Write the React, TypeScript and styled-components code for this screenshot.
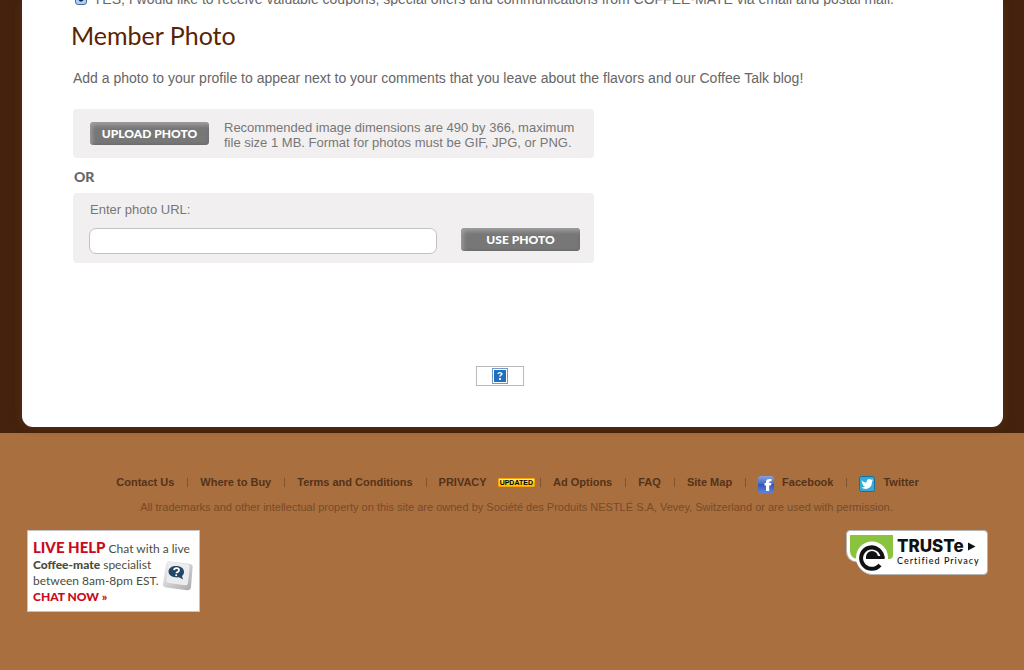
import React from "react";
import styled, { createGlobalStyle } from "styled-components";

const GlobalStyle = createGlobalStyle`
  *, *::before, *::after { box-sizing: border-box; }
  body {
    margin: 0;
    background: #a96f3f;
    font-family: "Liberation Sans", Arial, sans-serif;
  }
`;

const Surround = styled.div`
  padding: 0 21px 6px 22px;
  background: #44220d;
`;

const Card = styled.main`
  display: flex;
  flex-direction: column;
  align-items: flex-start;
  padding: 0 50px 41px;
  background: #fff;
  border-radius: 0 0 11px 11px;
  box-shadow: 0 0 9px #5c3014;
  color: #666;
`;

const OptIn = styled.label`
  display: flex;
  align-items: flex-end;
  gap: 6px;
  height: 6px;
  margin-left: 3px;
  overflow: hidden;
  font-size: 14px;
  line-height: 14px;
  white-space: nowrap;
`;

const Tick = styled.input`
  appearance: none;
  flex: none;
  width: 12px;
  height: 12px;
  margin: 0 0 1px;
  border: 1px solid #4a6a9c;
  border-radius: 3px;
  background: radial-gradient(circle at 5px 5px, #10243f 2px, #a9d0f5 3px);
`;

const Title = styled.h1`
  margin: 13px 0 0 -1px;
  color: #5a2403;
  font: 400 25px/32px Lato, sans-serif;
`;

const Intro = styled.p`
  margin: 19px 0 0 1px;
  font-size: 14px;
  line-height: 16px;
`;

const Panel = styled.section`
  width: 521px;
  max-width: 100%;
  margin-left: 1px;
  border-radius: 4px;
  background: #f1eff0;
  color: #777;
  font-size: 13px;
  line-height: 15px;
`;

const UploadPanel = styled(Panel)`
  display: flex;
  align-items: center;
  gap: 15px;
  margin-top: 23px;
  padding: 8px 0 8px 17px;
`;

const UrlPanel = styled(Panel)`
  display: flex;
  flex-direction: column;
  padding: 9px 14px 9px 16px;
`;

const UrlRow = styled.div`
  display: flex;
  align-items: flex-start;
  gap: 24px;
  margin-top: 11px;
`;

const UrlLabel = styled.label`
  padding-left: 1px;
`;

const UrlInput = styled.input`
  flex: 1;
  min-width: 0;
  height: 26px;
  padding: 0 8px;
  border: 1px solid #c2c2c2;
  border-radius: 7px;
  background: #fff;
  font: 13px "Liberation Sans", Arial, sans-serif;
`;

const Hint = styled.p`
  margin: 0;
  padding-top: 3px;
`;

const GreyButton = styled.button`
  flex: none;
  width: 119px;
  height: 23px;
  padding: 0;
  border: 0;
  border-radius: 4px;
  background: #777;
  box-shadow: inset 2px 3px 4px #a0a0a0, inset -1px -1px 2px #686868;
  color: #fff;
  font: 900 12px/23px Lato, sans-serif;
`;

const Or = styled.p`
  margin: 10px 0 7px 2px;
  font: 900 14px/18px Lato, sans-serif;
`;

const MissingImage = styled.button`
  display: flex;
  align-items: center;
  justify-content: center;
  align-self: center;
  width: 48px;
  height: 20px;
  margin: 103px 25px 0 0;
  padding: 0;
  border: 1px solid #bbb;
  background: #fff;
`;

const Footer = styled.footer`
  display: flex;
  flex-direction: column;
  align-items: center;
  padding: 40px 36px 58px 27px;
  color: #774b28;
  font-size: 11px;
`;

const FooterNav = styled.nav`
  display: flex;
  align-items: center;
  height: 18px;
  margin-left: 20px;
  font-weight: 700;
  white-space: nowrap;
`;

const FooterLink = styled.a`
  display: flex;
  align-items: center;
  gap: 8px;
  color: #54331a;
  text-decoration: none;

  svg {
    margin: 2px 0 -2px;
  }
`;

const Divider = styled.span<{ $tight?: boolean }>`
  width: 1px;
  height: 9px;
  margin: 0 12px 0 ${(p) => (p.$tight ? 5 : 13)}px;
  background: #80532f;
`;

const Updated = styled.span`
  margin-left: 3px;
  padding: 0 1px;
  border: 1px solid #f9a600;
  border-radius: 1px;
  background: linear-gradient(#fff6b0, #ffc400 70%);
  color: #000;
  font: 700 7px/7px "Liberation Sans", sans-serif;
`;

const Legal = styled.p`
  margin: 10px 0 0 18px;
  line-height: 13px;
`;

const Badges = styled.div`
  display: flex;
  align-items: flex-start;
  justify-content: space-between;
  align-self: stretch;
  margin-top: 16px;
`;

const Chat = styled.a`
  display: flex;
  width: 173px;
  height: 82px;
  padding: 8px 5px;
  border: 1px solid #c8c2c4;
  background: #fff;
  color: #4b4d3c;
  font: 12px/16px Lato, sans-serif;
  text-decoration: none;
  white-space: nowrap;
`;

const ChatText = styled.span`
  width: 129px;

  b {
    font-weight: 900;
  }
`;

const Red = styled.b<{ $large?: boolean }>`
  color: #cb0920;
  font-size: ${(p) => (p.$large ? 15 : 12)}px;
`;

const ChatKey = styled.svg`
  flex: none;
  margin-top: 20px;
`;

const Truste = styled.a`
  display: flex;
`;

const facebook = (
  <svg width="16" height="17" viewBox="0 0 16 17" aria-hidden="true">
    <defs>
      <linearGradient id="fb" x2="0" y2="1">
        <stop offset="0" stopColor="#86a0e0" />
        <stop offset=".45" stopColor="#4a6cc0" />
        <stop offset=".5" stopColor="#3158b4" />
        <stop offset="1" stopColor="#5d83e0" />
      </linearGradient>
    </defs>
    <rect width="16" height="17" rx="3" fill="url(#fb)" />
    <path d="M8 15V9.500H6.500V7H8V6c0-2.500 1.500-3.500 5.500-3v2.300c-1.800-.2-2.300.1-2.300 1.700h2.200l-.4 2.500h-1.800V15z" fill="#fff" />
  </svg>
);

const twitter = (
  <svg width="16" height="16" viewBox="0 0 16 16" aria-hidden="true">
    <rect x=".5" y=".5" width="15" height="15" rx="2" fill="#36abd8" stroke="#176f9b" />
    <path d="M2.500 4.200C4 5.700 5.600 6.500 7.700 6.500 7.300 4.400 8.600 3 10.200 3c.8 0 1.400.3 1.900.8.700-.1 1.200-.4 1.700-.7-.2.600-.5 1-.9 1.400l1.400-.3-1.300 1.400C13.200 10 10.500 13 6.800 13c-1.700 0-3.200-.5-4.400-1.400 1.500.1 2.700-.3 3.700-1.100-1.200-.1-2-.8-2.300-1.700h1C3.500 8.300 2.900 7.400 2.900 6.200l1 .3C2.800 5.700 2.400 4.900 2.500 4.200z" fill="#fff" />
  </svg>
);

const items: { label: string; icon?: React.ReactNode; updated?: boolean }[] = [
  { label: "Contact Us" },
  { label: "Where to Buy" },
  { label: "Terms and Conditions" },
  { label: "PRIVACY", updated: true },
  { label: "Ad Options" },
  { label: "FAQ" },
  { label: "Site Map" },
  { label: "Facebook", icon: facebook },
  { label: "Twitter", icon: twitter },
];

export default function App() {
  return (
    <>
      <GlobalStyle />
      <Surround>
        <Card>
          <OptIn>
            <Tick type="checkbox" defaultChecked />
            YES, I would like to receive valuable coupons, special offers and communications from COFFEE-MATE via email and postal mail.
          </OptIn>
          <Title>Member Photo</Title>
          <Intro>
            Add a photo to your profile to appear next to your comments that you leave about the flavors and our Coffee Talk blog!
          </Intro>
          <UploadPanel>
            <GreyButton type="button">UPLOAD PHOTO</GreyButton>
            <Hint>
              Recommended image dimensions are 490 by 366, maximum
              <br />
              file size 1 MB. Format for photos must be GIF, JPG, or PNG.
            </Hint>
          </UploadPanel>
          <Or>OR</Or>
          <UrlPanel>
            <UrlLabel htmlFor="photo-url">Enter photo URL:</UrlLabel>
            <UrlRow>
              <UrlInput id="photo-url" type="text" />
              <GreyButton type="button">USE PHOTO</GreyButton>
            </UrlRow>
          </UrlPanel>
          <MissingImage type="submit" aria-label="Submit">
            <svg width="16" height="16" viewBox="0 0 16 16" aria-hidden="true">
              <rect x=".5" y=".5" width="15" height="15" fill="#fff" stroke="#6f9bd0" />
              <rect x="2" y="2" width="12" height="12" fill="#2270b8" />
              <path d="M5.500 6V5h1V4h3v1h1v2h-1v1h-1v1h-1V7h1V5h-1v1zM7 10h2v2H7z" fill="#e8f2fb" />
            </svg>
          </MissingImage>
        </Card>
      </Surround>
      <Footer>
        <FooterNav>
          {items.map((item, i) => (
            <React.Fragment key={item.label}>
              {i > 0 && <Divider $tight={items[i - 1].updated} />}
              <FooterLink href="#">
                {item.icon}
                {item.label}
                {item.updated && <Updated>UPDATED</Updated>}
              </FooterLink>
            </React.Fragment>
          ))}
        </FooterNav>
        <Legal>
          All trademarks and other intellectual property on this site are owned by Société des Produits NESTLÉ S.A, Vevey, Switzerland or are used with permission.
        </Legal>
        <Badges>
          <Chat href="#">
            <ChatText>
              <Red $large>LIVE HELP</Red> Chat with a live
              <br />
              <b>Coffee-mate</b> specialist
              <br />
              between 8am-8pm EST.
              <br />
              <Red>CHAT NOW »</Red>
            </ChatText>
            <ChatKey width="32" height="34" viewBox="0 0 32 34" aria-hidden="true">
              <defs>
                <linearGradient id="key" x2="1" y2="1">
                  <stop offset="0" stopColor="#f4f4f5" />
                  <stop offset="1" stopColor="#a9a9ad" />
                </linearGradient>
              </defs>
              <path d="M7 2l21 3q3 .5 2.600 3.500L29 28q-.5 3.500-4 3.300L4 28.500Q.6 28 1 25L4 4.500Q4.500 1.700 7 2z" fill="url(#key)" />
              <path d="M9 3l16 2q3 .5 2.700 3L26 24q-.4 2.500-3 2.200L7 24q-3-.5-2.600-3L6 5q.4-2.300 3-2z" fill="#ececee" />
              <path d="M14 7c5 0 8 2.500 8 6 0 1.700-.8 3-2 4l1 3.500-4-2.200C11 19 6.500 16.500 6.500 12.500 6.500 9 10 7 14 7z" fill="#224668" />
              <path d="M12 11c.4-2.500 5-2.300 5 .2 0 2-2.500 1.700-2.600 3" fill="none" stroke="#fff" strokeWidth="1.800" />
              <circle cx="14.200" cy="16.200" r="1" fill="#fff" />
            </ChatKey>
          </Chat>
          <Truste href="#" aria-label="TRUSTe Certified Privacy">
            <svg width="142" height="45" viewBox="0 0 142 45">
              <path d="M4 .5h134q3.500 0 3.500 3.500v36.500q0 4-4 4H26Q15 44 11 32Q.5 31 .5 21V4Q.5.5 4 .5z" fill="#fff" stroke="#b7b4b2" />
              <path d="M4 5h43v20q0 4-4 4H12Q4 28 4 21z" fill="#8ac43f" />
              <circle cx="26" cy="27.500" r="16" fill="#fff" />
              <path d="M36.500 28.500A10.700 10.700 0 1 0 34 35" fill="none" stroke="#111" strokeWidth="4" />
              <path d="M20 27a6 6 0 0 1 12 0z" fill="#111" />
              <path d="M20 27.500h18.500" stroke="#111" strokeWidth="3" />
              <text x="51" y="22" fontFamily="Inter, sans-serif" fontSize="17" fontWeight="800" fill="#111">TRUSTe</text>
              <path d="M122 12.500l7.500 4-7.500 4z" fill="#111" />
              <text x="51" y="34" fontFamily="Lato, sans-serif" fontSize="9" fontWeight="500" letterSpacing="1" fill="#111">Certified Privacy</text>
            </svg>
          </Truste>
        </Badges>
      </Footer>
    </>
  );
}
